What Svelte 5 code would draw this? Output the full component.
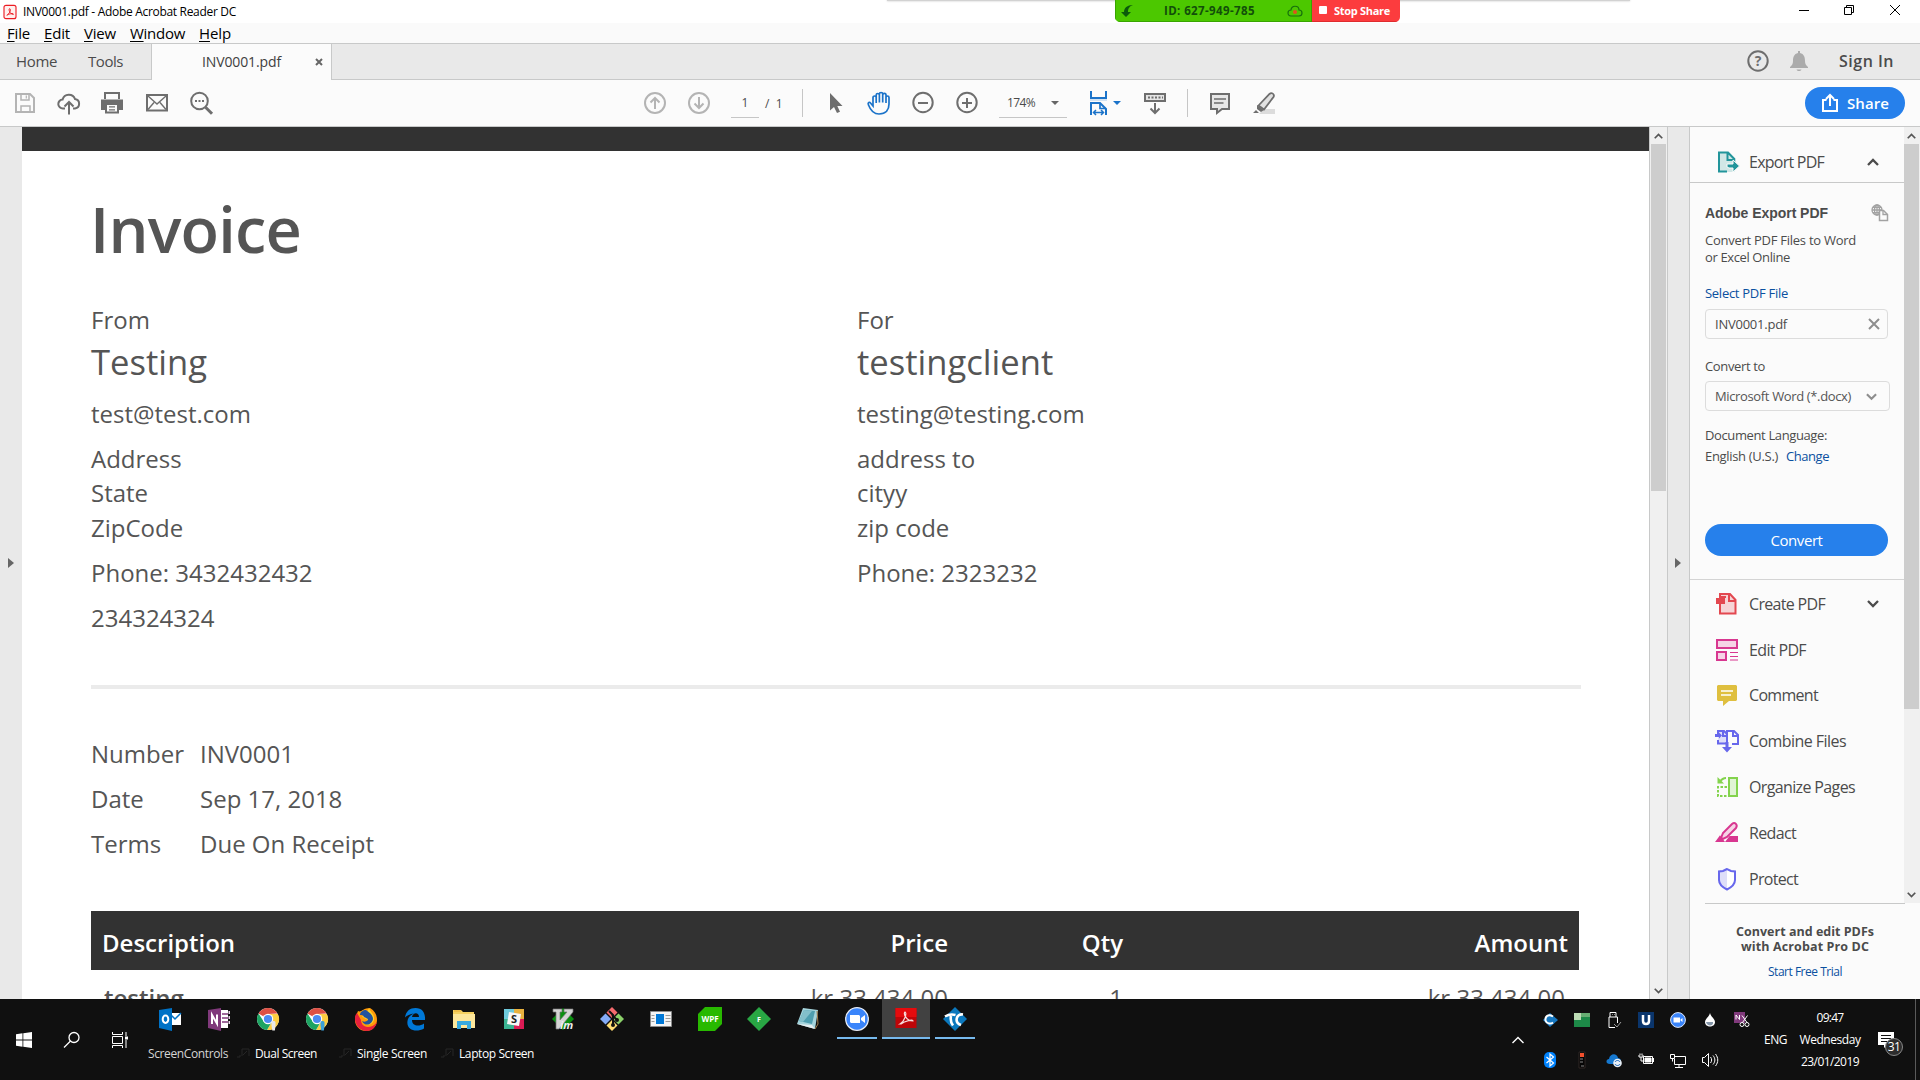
<script>
  // Spreads a label's letters so that it occupies the given width in pixels.
  function fit(node, width) {
    const natural = node.getBoundingClientRect().width;
    node.style.letterSpacing = (width - natural) / node.textContent.length + 'px';
  }

  const menus = [['File', 23], ['Edit', 26], ['View', 32], ['Window', 55], ['Help', 32]];
  const tools = [
    ['create', 'Create PDF', 76], ['edit', 'Edit PDF', 57], ['comment', 'Comment', 69],
    ['combine', 'Combine Files', 97], ['organize', 'Organize Pages', 106],
    ['redact', 'Redact', 47], ['protect', 'Protect', 49]
  ];
  const apps = ['outlook', 'onenote', 'chrome', 'chrome2', 'firefox', 'edge', 'folder', 'slack', 'vim',
    'git', 'window', 'wpf', 'feed', 'notepad', 'zoom', 'acrobat', 'tc'];
  const tray = ['citrix', 'green', 'usb', 'u', 'zoom', 'drop', 'clip', 'bluetooth', 'temp', 'cloud',
    'battery', 'network', 'sound'];
  const shortcuts = [['Dual Screen', 62], ['Single Screen', 70], ['Laptop Screen', 75]];
</script>

{#snippet chromeIcon(tag)}
  <circle cx="12" cy="12" r="11" fill="#fff"/>
  <path d="M12 12 2.5 6.5A11 11 0 0 1 21.5 6.5L12 7Z" fill="#dd5044"/>
  <path d="M12 7h9.8A11 11 0 0 1 11 23l5.5-9Z" fill="#fdcd41"/>
  <path d="M2.5 6.5A11 11 0 0 0 11 23l5-8.5-8 .5Z" fill="#1da462"/>
  <circle cx="12" cy="12" r="5.2" fill="#fff"/><circle cx="12" cy="12" r="4.1" fill="#4a8af4"/>
  <path d="M15.5 15.5c0-2 4-2 4 0v3l-.6 5h-2.6l-.8-5Z" fill={tag}/>
{/snippet}

{#snippet icon(name)}
  <svg class="icon" viewBox="0 0 24 24" fill="none" stroke-width="2" stroke="#6e6e6e">
    {#if name === 'save'}
      <g stroke="#b4b4b4"><path d="M3 3h14l4 4v14H3Z"/><path d="M8 3v6h8V3M8 21v-6h9v6" stroke-width="1.5"/><path d="M13.3 4.5v3" stroke-width="1.2"/></g>
    {:else if name === 'cloudup'}
      <path d="M8 17.5H6a4.5 4.5 0 0 1-.4-9A6.5 6.5 0 0 1 18 8a4.8 4.8 0 0 1 0 9.500h-2"/><path d="M12 23.500V11M7.500 15.500 12 11l4.500 4.500"/>
    {:else if name === 'print'}
      <path d="M5 8V2h14v6" /><path d="M1 8.500h22V19H1Z" fill="#6e6e6e" stroke="none"/><path d="M6 13h12v8.500H6Z" fill="#fbfbfb"/><path d="M9 15.800h6M9 18.800h6" stroke-width="1.200"/>
    {:else if name === 'mail'}
      <path d="M2 4h20v15.500H2Z"/><path d="m3 5 9 8 9-8M3 18.500 9 11.500M21 18.500l-6-7" stroke-width="1.400"/>
    {:else if name === 'find'}
      <circle cx="10.500" cy="10" r="8.300"/><path d="m16.500 16.200 6.500 6.500" stroke-width="3"/><path d="M6 10h2M9.500 10h2M13 10h2"/>
    {:else if name === 'up'}
      <g stroke="#b4b4b4"><circle cx="12" cy="12" r="10"/><path d="M12 18V7M7.500 11.500 12 7l4.500 4.500"/></g>
    {:else if name === 'down'}
      <g stroke="#b4b4b4"><circle cx="12" cy="12" r="10"/><path d="M12 6v11M7.500 12.500 12 17l4.500-4.500"/></g>
    {:else if name === 'arrow'}
      <path d="M6 2v17.500l4-3.500 3 6 3-1.300-2.700-5.700H18.500Z" fill="#6e6e6e" stroke="none"/>
    {:else if name === 'hand'}
      <path d="m6 15-2.500-3C2 10.300.5 12 1.500 14c1.500 4 4.500 9 10.500 9 7 0 10-4 10-10V6.500c0-2-3-2-3 0V12 4c0-2.300-3.300-2.300-3.300 0v7.500V3c0-2-3.300-2-3.300 0v8.500V4C12.400 2 9.200 2 9.200 4v8V6.500c0-2-3.200-2-3.200 0Z" stroke="#1b73c9" stroke-width="1.700"/>
    {:else if name === 'minus'}
      <circle cx="12" cy="11.500" r="9.700"/><path d="M7 12h10"/>
    {:else if name === 'plus'}
      <circle cx="12" cy="11.500" r="9.700"/><path d="M7 12h10M12 7v10"/>
    {:else if name === 'fitpage'}
      <g stroke="#1b73c9"><path d="M4 0v7h15V0"/><path d="M4 24V12h9l6 6v6" /><path d="M3 9h17" stroke="#c4dbf1" stroke-width="1.500"/><path d="M13 12v5.500h6" stroke-width="1.700"/><path d="M6.500 21.500h10M9 19l-2.500 2.500L9 24M14 19l2.500 2.500L14 24" stroke-width="1.500"/></g>
    {:else if name === 'keyboard'}
      <path d="M2 3h20v7H2Z" fill="#e4e4e4"/><path d="M5 6.500h15" stroke-dasharray="2 1.500"/><path d="M12 12v10M7.500 17.500 12 22l4.500-4.500"/>
    {:else if name === 'note'}
      <path d="M3 3h18v15h-7l-5 4v-4H3Z" fill="#e7e7e7"/><path d="M6 8h12M6 12h9.500" stroke-width="1.300"/>
    {:else if name === 'pen'}
      <path d="M7 23h16v-5H12Z" fill="#dcdcdc" stroke="none"/><path d="m6.500 14.500 11-11.500c2-2 5.500 0 4 3L12 18.500Z" fill="#e1e1e1" stroke-width="1.800"/><path d="m5 14 7 5-3 2-4-3ZM4 19l3 3H1Z" fill="#6e6e6e" stroke="none"/>
    {:else if name === 'help'}
      <circle cx="12" cy="12" r="9.700"/><text x="12" y="17" text-anchor="middle" font-size="14" font-weight="700" fill="#6e6e6e" stroke="none">?</text>
    {:else if name === 'bell'}
      <path d="M11 2h2v2c4 1 5 4 5 8 0 3 1 4.500 3 6v1H3v-1c2-1.500 3-3 3-6 0-4 1-7 5-8ZM9.500 20.500h5c-1 2-4 2-5 0Z" fill="#ababab" stroke="none"/>
    {:else if name === 'share'}
      <path d="M8.500 9H5v11h14V9h-3.500M12 15V5M8 8l4-4 4 4" stroke="#fff"/>
    {:else if name === 'export'}
      <path d="M4 2.500h9l6.500 6.500v13H4Z" fill="#d1e7e6" stroke="none"/><path d="M12 21.500H4V2.500h9l6.300 6.500v3M12.500 3v7H19" stroke="#22959b"/><path d="M12 17v-3h6v-4l6.500 6-6.500 6v-4h-4Z" fill="#22959b" stroke="#fbfbfb" stroke-width="1"/>
    {:else if name === 'globe'}
      <g stroke="#a2a2a2" stroke-width="1.300"><circle cx="9" cy="9" r="5"/><path d="M4 9h10M9 4v10M5 6.300h8M5 11.700h8"/><ellipse cx="9" cy="9" rx="2.500" ry="5"/><path d="M11.500 9.500h4l4 4v6h-8Z" fill="#fbfbfb" stroke-width="1.500"/><path d="M15 9.500v4h4.500"/></g>
    {:else if name === 'create'}
      <g stroke="#e34850"><path d="M5 2h10l5.500 6v13.500H5Z" fill="#f6d5d7"/><path d="M14 3v6h6"/><path d="M2 7h7v4H2ZM5 5h6" fill="#e34850"/></g>
    {:else if name === 'edit'}
      <g stroke="#d83790"><path d="M2 2h20v8H2ZM2 14h9v8H2Z" fill="#f6d3e6"/><path d="M15 14.500h8M15 18.500h8M15 22h8" stroke-width="1.200"/></g>
    {:else if name === 'comment'}
      <path d="M3 2h18l1 1v14l-1 1h-7l-6 5v-5H3l-1-1V3Z" fill="#dfbf3f" stroke="none"/><path d="M6 8h12M6 12h10" stroke="#fff" stroke-width="1.700"/>
    {:else if name === 'combine'}
      <g stroke="#6767ec"><path d="M3 7V2h6l3 3v9.500H3V11" fill="#dedef9"/><path d="M12 5V2h7l4 4v9h-6M8 3v4h4M18 3v4h5"/><path d="M0 5h4V3.500L7 6.500 4 9.500V8H0ZM10.500 13h3v5H17l-5 5.500L7 18h3.500Z" fill="#6767ec" stroke="none"/></g>
    {:else if name === 'organize'}
      <g stroke="#83d34d"><path d="M14 3h8v18h-8Z" fill="#e0f4d5"/><path d="M12 12H3v9h9" stroke-dasharray="2.500 1.500"/><path d="M11 3C8 3 6 5 4.500 7"/><path d="M2.500 2v6.500H9Z" fill="#83d34d" stroke="none"/></g>
    {:else if name === 'redact'}
      <g stroke="#d83790"><path d="m6 17 2-5 9-9c3-2.500 6 1 4 4l-9 9-4 2Z" fill="#f6d3e6"/><path d="M12 20h10v-4h-7ZM2 20l3-4 3 4Z" fill="#d83790"/></g>
    {:else if name === 'protect'}
      <path d="M12 2.500 21 5v8c0 4-4 7.500-9 9Z" fill="#fff" stroke="none"/><path d="M12 2.500 4 5v8c0 4 4 7.500 8 9Z" fill="#dedef9" stroke="none"/><path d="M12 2 8 4 4 4.500V13c0 4 4 7.500 8 9.500 4-2 8-5.500 8-9.500V4.500L16 4Z" stroke="#6767ec"/>
    {:else if name === 'pdf'}
      <rect x="3" y="2" width="18" height="20" rx="3" fill="#fff0ee" stroke="#ec1c24" stroke-width="1.700"/><path d="M7 17c5-3 7-9 4.500-10-2 0-.5 8 5.500 8.500 1-2-6-1-9 1" stroke="#ec1c24" stroke-width="1.500"/>
    {/if}
  </svg>
{/snippet}

{#snippet appIcon(name)}
  <svg class="app-icon" viewBox="0 0 24 24" fill="none">
    {#if name === 'outlook'}
      <path d="M13 6h10v12H13Z" fill="#fff"/><path d="m13 8 4 4 6-6" stroke="#0072c6" stroke-width="1.500"/><path d="M1 3 14 1v23L1 21Z" fill="#0072c6"/><ellipse cx="7.500" cy="12.300" rx="2.800" ry="3.700" stroke="#fff" stroke-width="2"/>
    {:else if name === 'onenote'}
      <path d="M14 3h7v18h-7Z" fill="#fff"/><path d="M15 7h6M15 11h6M15 15h6" stroke="#80397b" stroke-width="1.300"/><path d="M21.500 4h1.500v3h-1.500ZM21.500 9h1.500v3h-1.500ZM21.500 14h1.500v3h-1.500Z" fill="#e6cfe5"/><path d="M1 3 14 1v23L1 21Z" fill="#80397b"/><path d="M5 17V8l5 8.500V7.500" stroke="#fff" stroke-width="2"/>
    {:else if name === 'chrome'}
      {@render chromeIcon('#e8e8e8')}
    {:else if name === 'chrome2'}
      {@render chromeIcon('#3aa0d8')}
    {:else if name === 'firefox'}
      <path d="M4 4C7 6 9 1 16 1c5 3 7 7 7 12a11 11 0 0 1-22 0C1 9 3 7 4 4Z" fill="#ff9a0a"/><path d="M1 12c0 5 4 12 12 12 5 0 9-4 10-9-3 4-6 5-9 5-5 0-7-4-7-7L3 6C1 8 1 10 1 12Z" fill="#e8203c"/><path d="M15 1c1 4 6 6 5 12-2 6-9 6-11 2 3 1 5-1 5-2-3-1-4-3-6-3 2-3 5-3 7-9Z" fill="#ffd42a"/><path d="M12 3c-3 0-6 2-6 5 2 0 3 0 4 2 1 1 4 1 4 3-2 2-4 2-6 1 3 6 10 4 11-2 0-4-3-6-7-9Z" fill="#23539d"/>
    {:else if name === 'edge'}
      <path d="M2 10.500C3 4 7 1 12.500 1c7 0 10 5 9.500 12H9c0 6 7 7 12 3.500v5C13 26 3 23 4.500 14 5 10 8 7.500 11 6.500 7 7 4 8.500 2 10.500ZM9 10h7c0-5-6-5-7 0Z" fill="#0078d7"/>
    {:else if name === 'folder'}
      <path d="M1 3h8l2 2h11v16H1Z" fill="#f5d161"/><path d="M1 7h22v14H1Z" fill="#fde79b"/><path d="M5 22v-8h14v8h-4v-4H9v4Z" fill="#37a9df"/><path d="M2 4h7" stroke="#e8ab34"/>
    {:else if name === 'slack'}
      <path d="M2 2h10v10H2Z" fill="#6ecadc"/><path d="M12 2h10v10H12Z" fill="#e9b23f"/><path d="M12 12h10v10H12Z" fill="#dc1b55"/><path d="M2 12h10v10H2Z" fill="#3ab492"/><path d="m7 5 12 2-2 12-12-2Z" fill="#f7f7f7"/><text x="12" y="16" text-anchor="middle" font-size="11" font-weight="700" fill="#222">S</text>
    {:else if name === 'vim'}
      <path d="m12 1 11 11-11 11L1 12Z" fill="#0a9010"/><path d="M2 2h9v3H9v8l7-8h-3V2h9v3L8 22H5V5H2Z" fill="#d5d5d5" stroke="#777" stroke-width=".7"/><text x="9" y="21.500" font-size="11" font-weight="700" font-style="italic" fill="#eee">im</text>
    {:else if name === 'git'}
      <path d="m12 0 5.500 5.500L12 11 6.500 5.500Z" fill="#f56b6e"/><path d="m18.500 6.500 5.500 5.500-5.500 5.500L13 12Z" fill="#8bd16a"/><path d="m5.500 6.500L11 12l-5.500 5.500L0 12Z" fill="#85acf7"/><path d="m12 13 5.500 5.500L12 24l-5.500-5.500Z" fill="#ffdc73"/><path d="M9 4 13 8v10M12 8l5 5" stroke="#111" stroke-width="2"/><circle cx="17" cy="13" r="2" fill="#111"/><circle cx="13" cy="18" r="2" fill="#111"/>
    {:else if name === 'window'}
      <path d="M1.500 4.500h21v15h-21Z" fill="#f4f4f4" stroke="#8b8b8b"/><path d="M7 7h8v10H7Z" fill="#0078d7"/><path d="M2.500 8.500h3M2.500 11.500h3M2.500 14.500h3M16.500 8.500h5M16.500 11.500h5M16.500 14.500h5" stroke="#9b9b9b"/>
    {:else if name === 'wpf'}
      <path d="M7 0h17v17l-7 7H0V7Z" fill="#28b900"/><text x="12" y="15" text-anchor="middle" font-size="8" font-weight="700" fill="#fff">WPF</text>
    {:else if name === 'feed'}
      <path d="m12 0 12 12-12 12L0 12Z" fill="#29a744"/><text x="12" y="14.500" text-anchor="middle" font-size="7" font-weight="700" fill="#fff">F</text>
    {:else if name === 'notepad'}
      <path d="m7 1 15 2-3 19-18-5Z" fill="#a5d4dc"/><path d="m8 3 11 1-3 13-13-3Z" fill="#4e9fb0"/><path d="m8 3 8 1-9 11-4-1Z" fill="#83bfca"/><path d="m1 17 15 1 3 4Z" fill="#e7eff0"/><path d="m21 4 1 13-3 5" stroke="#a17d4c"/>
    {:else if name === 'zoom'}
      <circle cx="12" cy="12" r="11.300" fill="#3a85fb" stroke="#e7edf7" stroke-width="1.300"/><path d="M5 8h9l1 1v7H6l-1-1Zm11 3 4-3v8l-4-3Z" fill="#fff"/>
    {:else if name === 'acrobat'}
      <path d="M1.500 1h21v20h-21Z" fill="#bd0508"/><path d="M1.500 1h21v9h-21Z" fill="#e50b0d"/><path d="M6 17c5-3 7-11 5-12-2 1 1 9 8 9 0-2-8 0-12 3Z" stroke="#f7dada" stroke-width="1.200"/>
    {:else if name === 'tc'}
      <path d="m12 0 12 12-12 12L0 12Z" fill="#0b78bd"/><path d="M2 9.500c4-2.500 7-2.500 10.500-1.500M8 9c-1 5 0 7 2 9.500M20 7.500c-7-1-9 8-2 10.500" stroke="#fff" stroke-width="2.600"/>
    {/if}
  </svg>
{/snippet}

{#snippet trayIcon(name)}
  <svg class="tray-icon" viewBox="0 0 16 16" fill="none" stroke="#fff">
    {#if name === 'citrix'}
      <path d="m8 1 8 7-8 7-7-7Z" fill="#1678c1" stroke="none"/><path d="M11 4.500c-5-3-8 0-7.500 4 1 3 5 4 7.500 2" stroke-width="2"/>
    {:else if name === 'green'}
      <path d="M0 1h16v14H0Z" fill="#1d8a48" stroke="none"/><path d="M0 1h7v7H0Z" fill="#bcdcb5" stroke="none"/><path d="M7 1h9v4H7Z" fill="#67ae73" stroke="none"/>
    {:else if name === 'usb'}
      <path d="M4 5V.5h6V5M3 15.500V5h8.500v6M3 15.500h6M6 2.500h.5M8 2.500h.5"/><path d="m8 12 3 3 4-5" stroke="#999"/>
    {:else if name === 'u'}
      <path d="M0 0h16v16H0Z" fill="#0a356c" stroke="none"/><path d="M5 3v6c0 4 6 4 6 0V3" stroke-width="2.500"/>
    {:else if name === 'zoom'}
      <circle cx="8" cy="8" r="7.400" fill="#3a85fb" stroke="#dfe8f8"/><path d="M3.500 5.500H10v5H3.500Zm7 2 2-1.500v4l-2-1.500Z" fill="#fff" stroke="none"/>
    {:else if name === 'drop'}
      <path d="M8 1c1 4 5 6 5 9 0 6-10 6-10 0 0-3 4-5 5-9Z" fill="#fff" stroke="none"/><path d="M4 10h7c1 4-6 5-7 0Z" fill="#8496a9" stroke="none"/>
    {:else if name === 'clip'}
      <path d="M0 0h11v11H0Z" fill="#80397b" stroke="none"/><path d="M2 7.500V3l3.500 4.500V3M8 3.500l5 7M13.500 3.500l-5 7"/><circle cx="8" cy="12.500" r="2"/><circle cx="13" cy="12.500" r="2"/>
    {:else if name === 'bluetooth'}
      <rect x="2" width="12" height="16" rx="5" fill="#0082fc" stroke="none"/><path d="m4.500 5 7 6-3.500 3V2l3.500 3-7 6" stroke-width="1.200"/>
    {:else if name === 'temp'}
      <path d="M5 0h6v16H5Z" fill="#050505" stroke="#443532" stroke-width=".6"/><path d="M6 1h4v4H6Z" fill="#f2502d" stroke="none"/><path d="M6 7h3M6 10h3M7 14h3" stroke="#888"/>
    {:else if name === 'cloud'}
      <path d="M4 12c-5 0-4-5-1-5 1-6 8-6 9-1 3 0 4 4 2 6Z" fill="#1578d0" stroke="none"/><circle cx="11.500" cy="11" r="4.300" fill="#eaf0f7" stroke="none"/><path d="M9 10c1-2 4-2 5 0M14 12c-1 2-4 2-5 0" stroke="#1762b4"/>
    {:else if name === 'battery'}
      <path d="M5.500 4.500h9v7h-9Z"/><path d="M7 6h6v4H7Z" fill="#fff"/><path d="M15.500 6v4M1 3v2h4V3M3 5v4h3M2 1.500v2M4 1.500v2"/>
    {:else if name === 'network'}
      <path d="M5 4.500h10.500v8H4.500V7M9 12.500v3M5 15.500h8M.5 2.500h4v4h-4ZM2.500 6.500v3"/>
    {:else if name === 'sound'}
      <path d="M.5 5.500h2l4-4v13l-4-4h-2ZM8.500 5c1.500 2 1.500 4 0 6M11 3.500c2.500 3 2.500 6 0 9M13.500 2c3 4 3 8 0 12"/>
    {/if}
  </svg>
{/snippet}

{#snippet chevron(up)}
  <svg class="chevron" class:flip={up} viewBox="0 0 12 8" fill="none" stroke="currentColor" stroke-width="2.300"><path d="m1 1 5 5 5-5"/></svg>
{/snippet}

<div class="screen">
  <header class="titlebar">
    <span class="pdf-logo">{@render icon('pdf')}</span>
    <span use:fit={213}>INV0001.pdf - Adobe Acrobat Reader DC</span>
    <svg class="controls" viewBox="0 0 102 12" fill="none" stroke="#000"><path d="M0 6.500h10M45.500 3.500h7v7h-7ZM47.500 3V1.500h7v7H53M91 1l10 10M101 1 91 11"/></svg>
  </header>

  <nav class="menubar">
    {#each menus as [label, width]}
      <span use:fit={width}><u>{label[0]}</u>{label.slice(1)}</span>
    {/each}
  </nav>

  <div class="tabs">
    <div class="tab home"><span use:fit={41}>Home</span></div>
    <div class="tab tools"><span use:fit={35}>Tools</span></div>
    <div class="tab active">
      <span use:fit={79}>INV0001.pdf</span>
      <svg class="close" viewBox="0 0 8 8" stroke="#666" stroke-width="2"><path d="m1 1 6 6M7 1 1 7"/></svg>
    </div>
    <div class="account">
      {@render icon('help')}{@render icon('bell')}
      <span use:fit={55}>Sign In</span>
    </div>
  </div>

  <div class="toolbar">
    {#each ['save', 'cloudup', 'print', 'mail', 'find', 'up', 'down'] as name}{@render icon(name)}{/each}
    <span class="field page">1</span>
    <span class="count">/&nbsp; 1</span>
    <i class="divider"></i>
    {#each ['arrow', 'hand', 'minus', 'plus'] as name}{@render icon(name)}{/each}
    <span class="field zoom"><span use:fit={28}>174%</span><b class="caret"></b></span>
    {@render icon('fitpage')}
    <b class="caret blue"></b>
    {@render icon('keyboard')}
    <i class="divider"></i>
    {@render icon('note')}
    {@render icon('pen')}
    <button class="share">{@render icon('share')}<span use:fit={42}>Share</span></button>
  </div>

  <main>
    <div class="gutter left"><b class="pointer"></b></div>
    <section class="document">
      <div class="page-top"></div>
      <article>
        <h1 use:fit={211}>Invoice</h1>
        <div class="parties">
          <div>
            <p>From</p><p class="name">Testing</p><p class="mail">test@test.com</p>
            <p>Address</p><p>State</p><p>ZipCode</p>
            <p class="gap">Phone: 3432432432</p><p class="gap">234324324</p>
          </div>
          <div>
            <p>For</p><p class="name">testingclient</p><p class="mail">testing@testing.com</p>
            <p>address to</p><p>cityy</p><p>zip code</p>
            <p class="gap">Phone: 2323232</p>
          </div>
        </div>
        <hr />
        <dl>
          <dt>Number</dt><dd>INV0001</dd>
          <dt>Date</dt><dd>Sep 17, 2018</dd>
          <dt>Terms</dt><dd>Due On Receipt</dd>
        </dl>
        <div class="row head"><span>Description</span><span>Price</span><span>Qty</span><span>Amount</span></div>
        <div class="row item"><strong>testing</strong><span>kr.33,434.00</span><span>1</span><span>kr.33,434.00</span></div>
      </article>
    </section>
    <div class="scroll doc-scroll">
      {@render chevron(true)}<div class="thumb"></div><div class="rest"></div>{@render chevron(false)}
    </div>
    <div class="gutter right"><b class="pointer"></b></div>
    <aside>
      <div class="upper">
        <div class="tool-list">
          <div class="export-head">{@render icon('export')}<span use:fit={75}>Export PDF</span>{@render chevron(true)}</div>
          <div class="export">
            <h2><span use:fit={123}>Adobe Export PDF</span>{@render icon('globe')}</h2>
            <p class="intro"><span use:fit={151}>Convert PDF Files to Word</span><br /><span use:fit={85}>or Excel Online</span></p>
            <p class="link select"><span use:fit={83}>Select PDF File</span></p>
            <div class="input file"><span use:fit={72}>INV0001.pdf</span><svg class="clear" viewBox="0 0 12 12" stroke="#8e8e8e" stroke-width="2"><path d="m1 1 10 10M11 1 1 11"/></svg></div>
            <p class="to"><span use:fit={60}>Convert to</span></p>
            <div class="input format"><span use:fit={136}>Microsoft Word (*.docx)</span>{@render chevron(false)}</div>
            <p class="language"><span use:fit={122}>Document Language:</span></p>
            <p class="change"><span use:fit={73}>English (U.S.)</span><span class="link" use:fit={43}>Change</span></p>
            <button class="convert"><span use:fit={52}>Convert</span></button>
          </div>
          <ul>
            {#each tools as [name, label, width], i}
              <li>{@render icon(name)}<span use:fit={width}>{label}</span>{#if i === 0}{@render chevron(false)}{/if}</li>
            {/each}
          </ul>
        </div>
        <div class="scroll panel-scroll">
          {@render chevron(true)}<div class="thumb"></div><div class="rest"></div>{@render chevron(false)}
        </div>
      </div>
      <footer>
        <strong><span use:fit={138}>Convert and edit PDFs</span><br /><span use:fit={128}>with Acrobat Pro DC</span></strong>
        <span class="link" use:fit={74}>Start Free Trial</span>
      </footer>
    </aside>
  </main>

  <div class="taskbar">
    <div class="system">
      <svg class="tray-icon" viewBox="0 0 16 16" fill="#fff"><path d="M0 2.300 6.500 1.300V7.600H0ZM7.300 1.200 16 0v7.600H7.300ZM0 8.400h6.500v6.300L0 13.800ZM7.300 8.400H16V16l-8.700-1.200Z"/></svg>
      <svg class="tray-icon" viewBox="0 0 16 16" fill="none" stroke="#fff" stroke-width="1.300"><circle cx="10" cy="5.500" r="5"/><path d="M6.500 9 0 15.500"/></svg>
      <svg class="tray-icon" viewBox="0 0 16 16" fill="none" stroke="#fff"><path d="M.5 0v2.500h10V0M.5 16v-2.500h10V16M.5 4.500h10v7H.5ZM14 0v4M14 8v8"/><path d="M13 4.500h3v3h-3Z" fill="#fff" stroke="none"/></svg>
    </div>
    <div class="programs">
      <div class="apps">
        {#each apps as name}
          <div class="app" class:open={name === 'zoom' || name === 'tc'} class:current={name === 'acrobat'}>{@render appIcon(name)}</div>
        {/each}
      </div>
      <div class="labels">
        <span class="group" use:fit={80}>ScreenControls</span>
        {#each shortcuts as [label, width]}
          <svg class="ghost" viewBox="0 0 14 10" fill="none" stroke="#262626"><path d="M1 9h3V7M6 8V1h7v7M7 7l4-4"/></svg>
          <span class="shortcut" use:fit={width}>{label}</span>
        {/each}
      </div>
    </div>
    <svg class="more" viewBox="0 0 12 8" fill="none" stroke="#fff" stroke-width="1.400"><path d="m.5 7 5.500-5.500L11.500 7"/></svg>
    <div class="tray">{#each tray as name}{@render trayIcon(name)}{/each}</div>
    <span class="lang" use:fit={23}>ENG</span>
    <div class="clock"><span use:fit={27}>09:47</span><span use:fit={61}>Wednesday</span><span use:fit={58}>23/01/2019</span></div>
    <div class="notify">
      <svg viewBox="0 0 16 16"><path d="M0 0h16v13H9l-3 3v-3H0Z" fill="#fff"/><path d="M3 3.500h10M3 6.500h10M3 9.500h6" stroke="#111"/></svg>
      <span class="badge">31</span>
    </div>
    <i class="desktop-edge"></i>
  </div>

  <div class="share-shadow"></div>
  <div class="meeting">
    <div class="id">
      <svg class="leaf" viewBox="0 0 12 12" fill="#0b5a0b"><path d="M12 0C6 0 3 3 3 7H0l5 5 5-5H7c0-4 2-6 5-7Z"/></svg>
      <span use:fit={91}>ID: 627-949-785</span>
      <svg class="rec" viewBox="0 0 16 12" fill="none" stroke="#17700c" stroke-width="1.200"><path d="M4 11C0 11 0 5 4 5c0-5 8-5 8 0 4 0 4 6 0 6Z"/><circle cx="8" cy="7" r="2" fill="#e0521e" stroke="none"/></svg>
    </div>
    <div class="stop"><i></i><span use:fit={56}>Stop Share</span></div>
  </div>
</div>

<style>
  :global(body) { margin: 0; overflow: hidden; }
  * { box-sizing: border-box; }
  .screen { width: 1920px; height: 1080px; position: relative; overflow: hidden; display: flex; flex-direction: column; font-family: "Open Sans", "Noto Sans", sans-serif; color: #4b4b4b; background: #fbfbfb; white-space: nowrap; }
  p, h1, h2, ul, dl, dd { margin: 0; padding: 0; font-weight: 400; }
  button { font-family: inherit; border: 0; padding: 0; }
  svg { display: block; flex: none; overflow: visible; }
  .icon { width: 24px; height: 24px; }

  .titlebar { height: 23px; background: #fff; display: flex; align-items: center; font-size: 12px; color: #000; padding: 0 19px 0 2px; }
  .titlebar > span { line-height: 22px; }
  .pdf-logo { width: 21px; }
  .pdf-logo .icon { width: 16px; height: 16px; }
  .controls { width: 102px; height: 12px; margin: 0 0 3px auto; }
  .menubar { height: 21px; display: flex; gap: 14px; padding-left: 7px; font-size: 15px; line-height: 20px; color: #000; background: #fafafa; border-bottom: 1px solid #c8c9c9; }
  .menubar u { text-underline-offset: 2px; text-decoration-thickness: 1px; }

  .tabs { height: 36px; display: flex; background: #e9e9e9; font-size: 15px; line-height: 35px; }
  .tab { border-bottom: 1px solid #c8c9c9; }
  .home { width: 88px; padding-left: 16px; }
  .tools { width: 64px; border-right: 1px solid #c8c9c9; }
  .active { width: 180px; padding: 0 0 1px 50px; background: #fbfbfb; border-right: 1px solid #c8c9c9; border-bottom: 0; font-size: 14px; color: #404040; display: flex; align-items: center; }
  .close { width: 8px; height: 8px; margin-left: 34px; }
  .account { flex: 1; border-bottom: 1px solid #c8c9c9; display: flex; justify-content: flex-end; align-items: center; padding-right: 26px; font-weight: 600; font-size: 16px; }
  .account .icon { margin: 0 17px 2px 0; }
  .account span { margin-left: 11px; }

  .toolbar { height: 47px; padding-left: 13px; border-bottom: 1px solid #c8c9c9; display: grid; align-items: center; grid-template-columns: 44px 43px 45px 44px 454px 44px 44px 34px 37px 22px 43px 44px 44px 44px 88px 26px 30px 44px 21px 44px 553px 100px; font-size: 12px; }
  .divider { width: 1px; height: 28px; background: #c6c6c6; }
  .field { height: 29px; line-height: 28px; border-bottom: 1px solid #c6c6c6; }
  .page { width: 28px; text-align: center; }
  .zoom { width: 68px; padding: 0 8px; display: flex; justify-content: space-between; align-items: center; }
  .caret { width: 0; border: 4px solid transparent; border-top-color: #666; border-bottom: 0; }
  .caret.blue { border-top-color: #1b73c9; }
  .share { height: 32px; border-radius: 16px; background: #2680eb; color: #fff; display: flex; align-items: center; gap: 5px; padding: 0 0 1px 13px; font-size: 15px; font-weight: 600; }

  main { height: 872px; display: flex; overflow: hidden; }
  .gutter { width: 22px; background: #e9e9e9; display: flex; align-items: center; justify-content: center; padding-bottom: 1px; }
  .gutter.right { width: 23px; border: 1px solid #c8c9c9; border-width: 0 1px 0 1px; justify-content: flex-start; padding-left: 7px; }
  .pointer { border: 5px solid transparent; border-left: 6px solid #666; border-right: 0; }
  .document { width: 1627px; background: #fff; color: #555; overflow: hidden; }
  .page-top { height: 24px; background: #323232; }
  article { padding-left: 69px; font-size: 24px; }
  h1 { font-size: 63px; font-weight: 600; line-height: 80px; margin: 38px 0 0 -1px; width: max-content; }
  .parties { height: 382px; margin-top: 34px; display: grid; grid-template-columns: 766px auto; align-content: start; }
  .parties p { line-height: 34.600px; }
  .parties p.name { font-size: 34.600px; line-height: 44px; margin-top: 2px; }
  .parties p.mail { margin: 13px 0 10.400px; }
  .parties p.gap { margin-top: 10.400px; }
  hr { width: 1490px; height: 4px; margin: 0; border: 0; background: #ebebeb; }
  dl { display: grid; grid-template-columns: 109px auto; line-height: 45.200px; margin-top: 42px; }
  .row { display: grid; width: 1488px; padding: 0 11px 0 11px; grid-template-columns: 600px 246px 175px 1fr; text-align: right; }
  .row > :first-child { text-align: left; }
  .head { height: 59px; margin-top: 44.400px; line-height: 64px; background: #323232; color: #fff; font-weight: 600; }
  .item { line-height: 34px; padding: 11px 14px 0 13px; grid-template-columns: 598px 246px 175px 1fr; }
  .item strong { font-weight: 600; }

  .scroll { background: #f0f0f0; display: flex; flex-direction: column; align-items: center; color: #555; }
  .scroll .chevron { width: 9px; height: 6px; margin: 6px 0 5px; }
  .thumb { width: 15px; background: #cdcdcd; }
  .rest { flex: 1; }
  .doc-scroll { width: 18px; border-left: 1px solid #c8c9c9; }
  .doc-scroll .thumb { height: 347px; }
  .panel-scroll { width: 16px; padding-right: 1px; }
  .panel-scroll .thumb { height: 565px; }
  .chevron { width: 12px; height: 8px; }
  .flip { transform: rotate(180deg); }

  aside { flex: 1; background: #fbfbfb; display: flex; flex-direction: column; }
  .upper { height: 776px; display: flex; }
  .tool-list { width: 214px; overflow: hidden; }
  .export-head { height: 56px; padding: 15px 25px 0 25px; border-bottom: 1px solid #c8c9c9; display: flex; align-items: center; gap: 10px; font-size: 16px; }
  .export-head .chevron, li .chevron { margin-left: auto; }
  .export { height: 397px; padding: 22px 15px 0; border-bottom: 1px solid #d4d4d4; font-size: 13px; line-height: 17px; }
  h2 { height: 16px; display: flex; justify-content: space-between; align-items: center; font: 700 14px "Liberation Sans", sans-serif; }
  h2 .icon { margin-right: -3px; }
  .intro { margin-top: 11px; }
  .link { color: #0a50a0; }
  .select { margin: 19px 0 7px; }
  .input { width: 183px; height: 30px; border: 1px solid #dcdcdc; border-radius: 4px; display: flex; align-items: center; justify-content: space-between; padding: 0 7px 0 9px; }
  .clear { width: 12px; height: 12px; }
  .to { margin: 19px 0 6px; }
  .format { width: 185px; padding: 1px 12px 0 9px; color: #555; }
  .format .chevron { width: 11px; color: #8e8e8e; }
  .language { margin: 16px 0 4px; }
  .change { display: flex; gap: 8px; }
  .convert { width: 183px; height: 32px; margin-top: 59px; border-radius: 16px; background: #2680eb; color: #fff; font-size: 15px; }
  ul { list-style: none; padding-top: 1px; }
  li { height: 45.800px; padding: 0 25px 0 25px; display: flex; align-items: center; gap: 10px; font-size: 16px; }
  footer { margin: 0 15px 0 15px; border-top: 1px solid #c8c9c9; padding-top: 20px; text-align: center; font-size: 13px; line-height: 15px; }
  footer strong { display: block; font-weight: 700; margin-bottom: 10px; font-size: 12.500px; }
  footer .link { font-size: 12px; }

  .taskbar { height: 81px; display: flex; align-items: center; background: #101010; color: #fff; font-size: 12px; }
  .system { display: flex; gap: 32px; padding-left: 16px; width: 146px; }
  .tray-icon { width: 16px; height: 16px; }
  .programs { width: 1366px; height: 81px; }
  .apps { display: flex; gap: 1.080px; }
  .app { width: 48px; height: 40px; padding: 8px 12px; }
  .app-icon { width: 24px; height: 24px; }
  .open { padding: 8px; margin: 0 4px; width: 40px; border-bottom: 2px solid #76b9ed; }
  .current { background: #414141; border-bottom: 2px solid #76b9ed; }
  .labels { display: flex; align-items: center; height: 28px; padding-left: 2px; }
  .group { color: #d5d5d5; }
  .ghost { width: 14px; height: 10px; margin: 0 5px 0 8px; }
  .ghost ~ .ghost { margin-left: 21px; }
  .ghost ~ .ghost ~ .ghost { margin-left: 13px; }
  .more { width: 12px; height: 8px; }
  .tray { width: 208px; margin-left: 18px; display: grid; grid-template-columns: repeat(7, 16px); column-gap: 16px; row-gap: 24px; }
  .lang { margin-left: 14px; }
  .clock { width: 62px; margin-left: 12px; display: flex; flex-direction: column; align-items: center; line-height: 22px; }
  .notify { position: relative; width: 16px; margin-left: 17px; }
  .notify svg { width: 16px; height: 16px; }
  .badge { position: absolute; left: 7px; top: 6px; width: 18px; height: 18px; line-height: 15px; border: 1px solid #888; border-radius: 50%; background: #2d2d2d; font-size: 12px; text-align: center; letter-spacing: -.5px; }
  .desktop-edge { width: 1px; height: 81px; margin: 0 4px 0 auto; background: #5a5a5a; }

  .share-shadow { position: absolute; left: 887px; top: 0; width: 743px; height: 1px; background: #d2d2d2; box-shadow: 0 0 2px #aaa; }
  .meeting { position: absolute; left: 1115px; top: 0; height: 22px; display: flex; border-radius: 0 0 5px 5px; overflow: hidden; font-size: 11.500px; font-weight: 700; line-height: 21px; }
  .id { width: 197px; padding: 0 8px 0 5px; display: flex; align-items: center; justify-content: space-between; background: #4cc800; color: #124f0a; border: 1px solid #38a500; border-top: 0; }
  .id span { margin-left: -1px; }
  .leaf { width: 12px; height: 12px; }
  .rec { width: 16px; height: 12px; }
  .stop { width: 88px; padding: 0 0 1px 7px; display: flex; align-items: center; gap: 7px; background: #fc3c3e; color: #fff; border-bottom: 1px solid #df2c2e; font-size: 11px; }
  .stop i { width: 8px; height: 8px; background: #fff; border-radius: 1px; }
</style>
